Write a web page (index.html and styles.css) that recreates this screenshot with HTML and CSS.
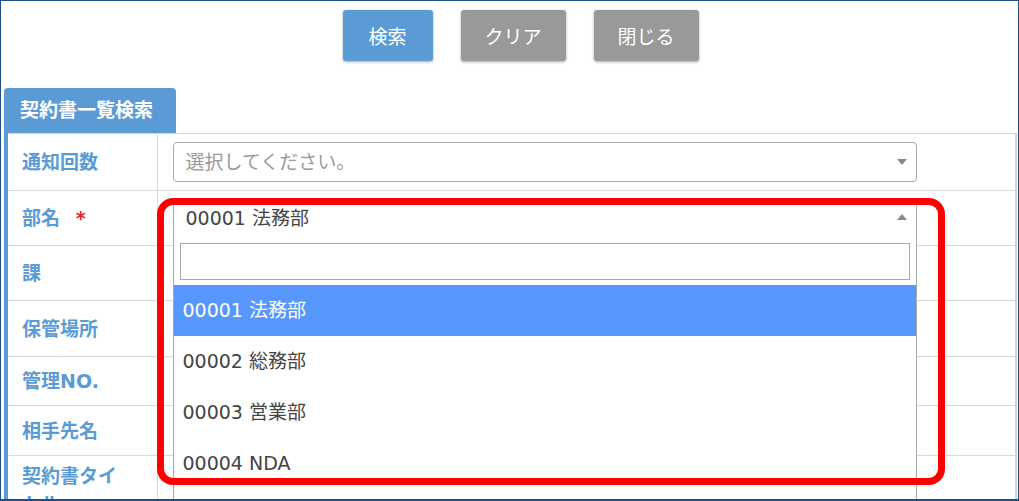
FILE: index.html
```html
<!DOCTYPE html>
<html lang="ja">

<head>
    <meta charset="UTF-8">
    <meta name="viewport" content="width=device-width, initial-scale=1.0">
    <title>契約書一覧検索</title>
    <link rel="stylesheet" href="styles.css">
</head>

<body>
    <div class="screen">
        <div class="toolbar">
            <button class="btn btn-blue">検索</button>
            <button class="btn btn-gray btn-wide">クリア</button>
            <button class="btn btn-gray btn-wide">閉じる</button>
        </div>

        <div class="panel">
            <div class="tab">契約書一覧検索</div>
            <div class="panel-body">
                <table class="form">
                    <tr class="row-1">
                        <th>通知回数</th>
                        <td>
                            <div class="select">
                                <span class="placeholder">選択してください。</span>
                                <span class="arrow arrow-down"></span>
                            </div>
                        </td>
                    </tr>
                    <tr class="row-2">
                        <th>部名 <span class="req">*</span></th>
                        <td>
                            <div class="select-box">
                                <div class="select select-open">
                                    <span>00001 法務部</span>
                                    <span class="arrow arrow-up"></span>
                                </div>
                                <!-- 開いたドロップダウン -->
                                <div class="dropdown">
                                    <div class="search"><input type="text"></div>
                                    <ul class="options">
                                        <li class="active">00001 法務部</li>
                                        <li>00002 総務部</li>
                                        <li>00003 営業部</li>
                                        <li>00004 NDA</li>
                                    </ul>
                                </div>
                            </div>
                        </td>
                    </tr>
                    <tr class="row-3">
                        <th>課</th>
                        <td></td>
                    </tr>
                    <tr class="row-4">
                        <th>保管場所</th>
                        <td></td>
                    </tr>
                    <tr class="row-5">
                        <th>管理NO.</th>
                        <td></td>
                    </tr>
                    <tr class="row-6">
                        <th>相手先名</th>
                        <td></td>
                    </tr>
                    <tr class="row-last">
                        <th>契約書タイ<br>トル</th>
                        <td></td>
                    </tr>
                </table>
            </div>
        </div>

        <!-- 赤枠 -->
        <div class="mark"></div>
    </div>
</body>

</html>
```

FILE: styles.css
```css
* {
    margin: 0;
    padding: 0;
    box-sizing: border-box;
}

body {
    font-family: "DejaVu Sans", "Noto Sans CJK JP", sans-serif;
    font-size: 19px;
    color: #444;
    background-color: #ffffff;
}

.screen {
    position: relative;
    width: 1019px;
    height: 501px;
    border: 1px solid #1f4e8c;
    border-bottom-width: 2px;
    overflow: hidden;
}

.toolbar {
    display: flex;
    justify-content: center;
    gap: 28px;
    padding: 9px 0 27px 22px;
}

.btn {
    width: 90px;
    height: 51px;
    border: none;
    border-radius: 3px;
    color: #ffffff;
    font-family: inherit;
    font-size: 19px;
    box-shadow: 0 1px 3px rgba(0, 0, 0, .35);
}

.btn-wide {
    width: 105px;
}

.btn-blue {
    background-color: #5b9bd5;
}

.btn-gray {
    background-color: #999999;
}

.panel {
    margin: 0 1px 0 3px;
}

.tab {
    width: 172px;
    height: 45px;
    line-height: 45px;
    padding-left: 16px;
    border-radius: 4px 4px 0 0;
    background-color: #5b9bd5;
    color: #ffffff;
    font-weight: bold;
}

.panel-body {
    border-left: 4px solid #5b9bd5;
}

.form {
    width: 100%;
    border-collapse: collapse;
    border-top: 1px solid #d4d4d4;
    border-right: 2px solid #d4d4d4;
}

.form th,
.form td {
    border-bottom: 1px solid #d9d9d9;
    vertical-align: middle;
}

.form th {
    width: 149px;
    padding: 0 14px;
    border-right: 1px solid #d9d9d9;
    text-align: left;
    color: #5b9bd5;
    font-weight: bold;
    line-height: 28px;
}

.form td {
    padding-left: 15px;
}

.row-1 {
    height: 57px;
}

.row-2 {
    height: 55px;
}

.row-3 {
    height: 55px;
}

.row-4 {
    height: 56px;
}

.row-5 {
    height: 49px;
}

.row-6 {
    height: 50px;
}

.row-last {
    height: 64px;
}

.row-last th {
    vertical-align: top;
    padding-top: 6px;
}

.req {
    margin-left: 9px;
    color: #e8232a;
}

.select {
    position: relative;
    width: 744px;
    height: 40px;
    line-height: 38px;
    padding-left: 12px;
    border: 1px solid #aaaaaa;
    border-radius: 4px;
    background-color: #ffffff;
}

.placeholder {
    color: #999999;
}

.select-box {
    position: relative;
    width: 744px;
}

.select-open {
    border-radius: 4px 4px 0 0;
    border-bottom-color: #aaaaaa;
}

.arrow {
    position: absolute;
    right: 9px;
    top: 16px;
    width: 0;
    height: 0;
    border-left: 5px solid transparent;
    border-right: 5px solid transparent;
}

.arrow-down {
    border-top: 6px solid #888888;
}

.arrow-up {
    top: 15px;
    border-bottom: 6px solid #888888;
}

.dropdown {
    position: absolute;
    top: 39px;
    left: 0;
    width: 744px;
    height: 320px;
    border: 1px solid #aaaaaa;
    border-top: none;
    background-color: #ffffff;
    z-index: 2;
}

.search {
    padding: 6px 6px 5px 6px;
}

.search input {
    width: 100%;
    height: 37px;
    border: 1px solid #aaaaaa;
    outline: none;
}

.options {
    list-style: none;
}

.options li {
    height: 51px;
    line-height: 51px;
    padding-left: 9px;
    color: #444;
}

.options li.active {
    background-color: #5897fb;
    color: #ffffff;
}

.mark {
    position: absolute;
    left: 156px;
    top: 197px;
    width: 788px;
    height: 287px;
    border: 7px solid #ff0000;
    border-radius: 16px;
    z-index: 3;
}
```
